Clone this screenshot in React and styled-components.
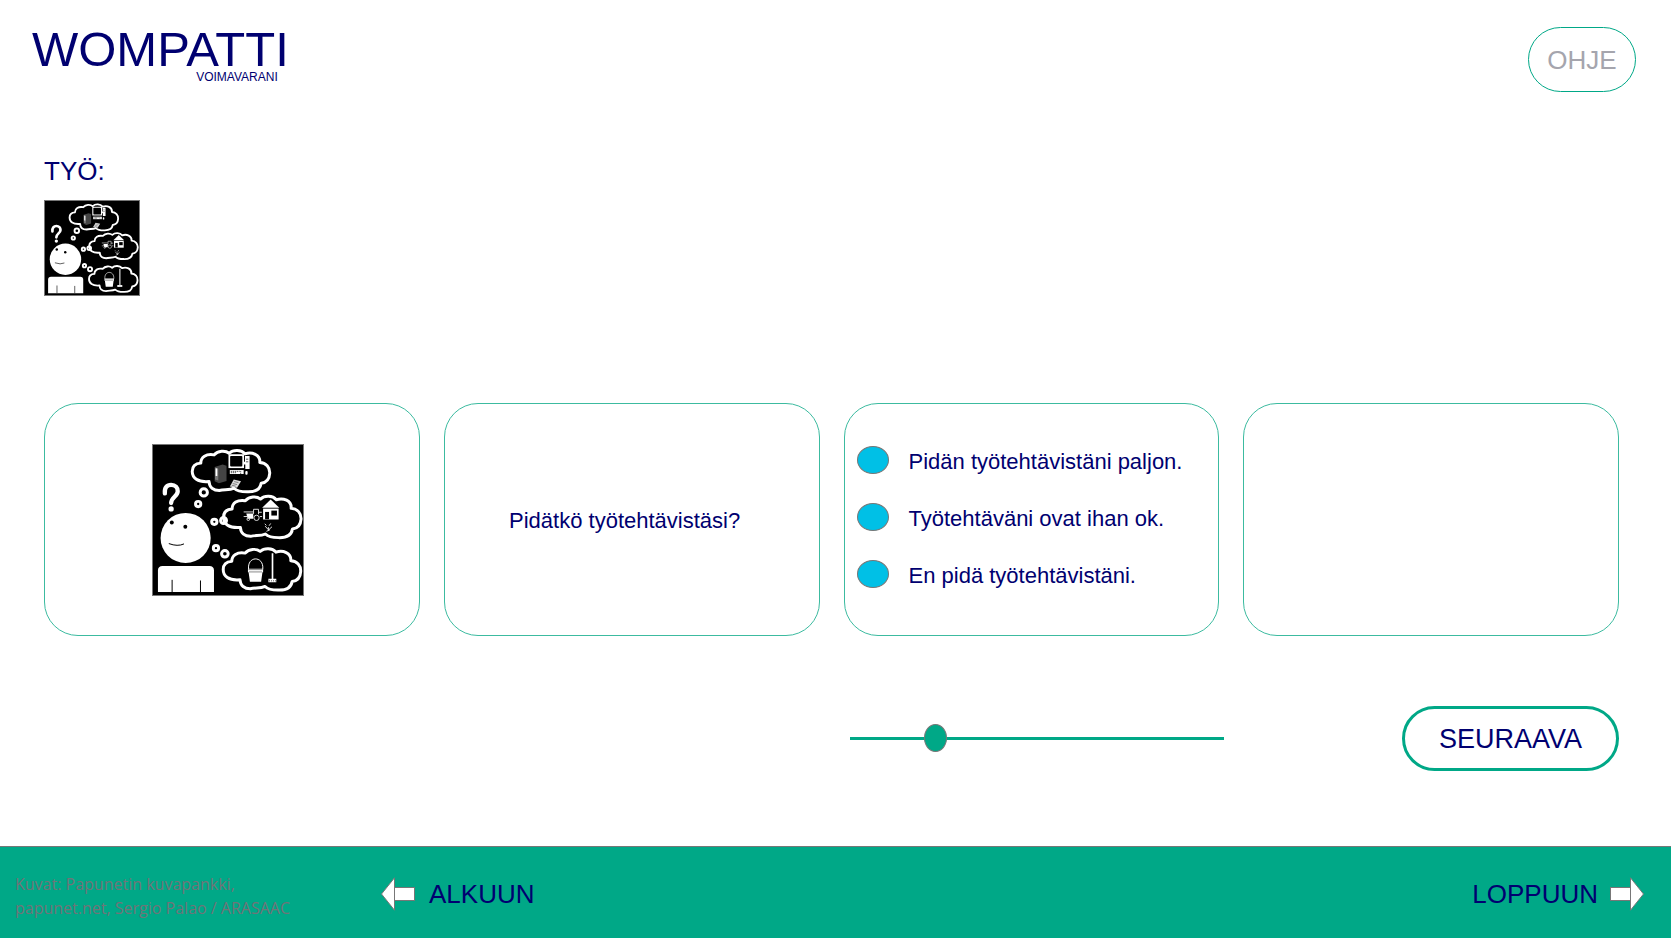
import React, { useState } from "react";
import styled, { createGlobalStyle } from "styled-components";

const navy = "#000070";
const green = "#00a887";
const outline = "#777777";

const GlobalStyle = createGlobalStyle`
  *, *::before, *::after { box-sizing: border-box; }
  body {
    margin: 0;
    background: #fff;
    color: ${navy};
    font-family: "Liberation Sans", Arial, sans-serif;
  }
  button, input { font: inherit; margin: 0; }
`;

const Page = styled.div`
  min-height: 100vh;
  display: flex;
  flex-direction: column;
`;

const Header = styled.header`
  display: flex;
  justify-content: space-between;
  align-items: flex-start;
  padding: 27px 35px 0 32px;
`;

const Brand = styled.div`
  display: flex;
  flex-direction: column;
  align-items: flex-end;
`;

const BrandName = styled.h1`
  margin: 0;
  font-size: 49px;
  line-height: 44px;
  font-weight: 400;
`;

const BrandTag = styled.p`
  margin: 0;
  padding-right: 11px;
  font-size: 12px;
  line-height: 12px;
`;

const PillButton = styled.button`
  width: ${(p) => (p.$wide ? 217 : 108)}px;
  height: 65px;
  padding: 0;
  border: ${(p) => (p.$wide ? 3 : 1)}px solid ${green};
  border-radius: 33px;
  background: #fff;
  color: ${(p) => (p.$muted ? "#a5a5ad" : navy)};
  font-size: ${(p) => (p.$wide ? 27 : 26)}px;
  line-height: 32px;
  cursor: pointer;
`;

const Main = styled.main`
  flex: 1;
  padding: 63px 52px 75px 44px;
`;

const Topic = styled.h2`
  margin: 0 0 13px;
  font-size: 26px;
  line-height: 32px;
  font-weight: 400;
`;

const Picture = styled.svg`
  display: block;
  width: ${(p) => p.$size}px;
  height: ${(p) => p.$size}px;
  border: 1px solid ${outline};
`;

const columns = `
  display: grid;
  grid-template-columns: repeat(4, minmax(0, 1fr));
  column-gap: 24px;
`;

const Cards = styled.div`
  ${columns}
  margin-top: 107px;
`;

const Card = styled.section`
  display: flex;
  align-items: center;
  justify-content: ${(p) => (p.$start ? "flex-start" : "center")};
  min-height: 233px;
  padding: 12px ${(p) => p.$end || 12}px 12px 12px;
  border: 1px solid #3cbba0;
  border-radius: 34px;
  font-size: 22px;
  line-height: 26px;
`;

const Question = styled.p`
  margin: 0;
  padding-top: 2px;
`;

const Options = styled.fieldset`
  margin: 0;
  padding: 0 0 6px;
  border: 0;
`;

const Option = styled.label`
  display: flex;
  align-items: center;
  gap: 20px;
  height: 57px;
  cursor: pointer;
`;

const OptionText = styled.span`
  padding-top: 4px;
`;

const Radio = styled.input`
  appearance: none;
  flex: none;
  width: 32px;
  height: 28px;
  border: 1px solid ${outline};
  border-radius: 50%;
  background: #00c0e6;
  &:checked { background: ${navy}; }
`;

const Controls = styled.div`
  ${columns}
  align-items: center;
  margin-top: 70px;
`;

const Slider = styled.input`
  grid-column: 3;
  appearance: none;
  height: 28px;
  margin: 0 -5px 0 6px;
  background: transparent;
  &::-webkit-slider-runnable-track {
    height: 3px;
    background: ${green};
  }
  &::-webkit-slider-thumb {
    appearance: none;
    width: 23px;
    height: 28px;
    margin-top: -13px;
    border: 1px solid ${outline};
    border-radius: 50%;
    background: ${green};
  }
`;

const NextCell = styled.div`
  grid-column: 4;
  display: flex;
  justify-content: flex-end;
`;

const Footer = styled.footer`
  display: flex;
  align-items: center;
  min-height: 92px;
  padding: 3px 27px 0 15px;
  border-top: 1px solid ${outline};
  background: ${green};
`;

const Credits = styled.p`
  flex: none;
  width: 366px;
  margin: 0;
  padding-top: 4px;
  color: #6f7478;
  font-family: "Open Sans", sans-serif;
  font-size: 16px;
  line-height: 24px;
  font-kerning: none;
`;

const NavButton = styled.button`
  display: flex;
  align-items: center;
  gap: ${(p) => (p.$end ? 11 : 13)}px;
  padding: 0;
  margin-left: ${(p) => (p.$end ? "auto" : "0")};
  border: 0;
  background: none;
  color: ${navy};
  font-size: 26px;
  line-height: 32px;
  cursor: pointer;
`;

const ArrowSvg = styled.svg`
  display: block;
  width: 35px;
  height: 34px;
  transform: ${(p) => (p.$flip ? "scaleX(-1)" : "none")};
`;

function Arrow({ flip }) {
  return (
    <ArrowSvg viewBox="0 0 35 34" $flip={flip} aria-hidden="true" fill="#fff" stroke="#777" strokeWidth="1">
      <rect x="13.5" y="10.5" width="20" height="13" />
      <path d="M.5 17 13.500.8V33.200Z" />
    </ArrowSvg>
  );
}

const cloud =
  "M207 152C172 155 156 141 156 121C156 106 165 97 182 96C182 78 198 67 222 71C234 58 256 56 268 66C281 54 305 55 316 68C337 61 363 70 361 94C380 95 392 109 391 127C390 145 380 155 365 157C362 177 345 184 322 183C302 183 290 179 283 172C268 179 254 175 238 179C221 179 208 170 207 152Z";

function WorkPicture({ size }) {
  return (
    <Picture $size={size} viewBox="37 41 455 455" role="img" aria-label="Työ">
      <rect x="37" y="41" width="455" height="455" fill="#000" />
      <g fill="none" stroke="#fff" strokeWidth="9" strokeLinejoin="round">
        <path d={cloud} />
        <path d={cloud} transform="translate(95 139)" />
        <path d={cloud} transform="translate(94 298)" />
        <circle cx="191" cy="185" r="11" />
        <circle cx="174" cy="220" r="8" />
        <circle cx="223" cy="274" r="8" />
        <circle cx="251" cy="270" r="9" />
        <circle cx="228" cy="354" r="8" />
        <circle cx="255" cy="371" r="10" />
      </g>
      <path d="M73 188C71 170 80 162 92 162C105 162 112 171 112 181C112 197 92 199 92 217" fill="none" stroke="#fff" strokeWidth="13" strokeLinecap="round" />
      <g fill="#fff">
        <circle cx="92" cy="235" r="8" />
        <circle cx="136" cy="323" r="76" />
        <path d="M52 487V422Q52 408 66 408H208Q222 408 222 422V487Z" />
      </g>
      <circle cx="94" cy="276" r="6" />
      <circle cx="135" cy="289" r="6" />
      <path d="M85 340Q112 350 131 341M95 450V487M181 452V487" fill="none" stroke="#000" strokeWidth="3" />

      <g fill="#fff">
        <rect x="266" y="69" width="47" height="42" />
        <rect x="271" y="74" width="37" height="32" rx="3" fill="#000" />
        <path d="M316 74H330V114H317V100H313V92H316Z" />
        <path d="M319 84H326M319 92H326" stroke="#000" strokeWidth="2" />
        <rect x="270" y="117" width="42" height="12" />
        <path d="M273 121H300M273 125H290M303 120V129" stroke="#000" strokeWidth="2" strokeDasharray="4 2" />
        <rect x="317" y="120" width="7" height="11" rx="3" />
        <path d="M224 108 248 100 260 104V150L237 157 224 151Z" fill="#444" />
        <path d="M225 109 235 113V149L225 146Z" fill="#777" />
        <path d="M227 112H232V135H227Z" />
        <path d="M282 146 304 151 292 171 270 167Z" fill="#ddd" />
        <path d="M283 152 296 155M279 158 292 161M276 163 288 166" stroke="#555" strokeWidth="2" />
      </g>

      <g fill="#fff">
        <path d="M368 231 394 206 420 231Z" />
        <rect x="371" y="234" width="47" height="33" />
        <rect x="377" y="244" width="12" height="22" fill="#000" />
        <rect x="396" y="240" width="17" height="15" fill="#000" />
        <path d="M320 249H341V265H324Z" />
        <g fill="none" stroke="#ddd" strokeWidth="3">
          <path d="M342 250V236H357V251M312 244H341M312 258H323M357 245H367M361 258H368" />
          <circle cx="351" cy="262" r="8" />
          <circle cx="326" cy="266" r="4" />
          <path d="M387 302V290M387 298 377 287M387 299 398 289M381 285 376 280M389 286 394 279M381 303 392 298" />
        </g>
      </g>

      <path d="M327 418C322 376 374 376 370 418" fill="none" stroke="#fff" strokeWidth="3" />
      <path d="M325 416H371V427H369L365 456H331L327 427H325Z" fill="#fff" />
      <path d="M327 419H369M328 426H368" stroke="#888" strokeWidth="3" />
      <path d="M397 369H402V447H411V457H387V447H397Z" fill="#fff" />
      <path d="M389 453H410" stroke="#000" strokeWidth="2" strokeDasharray="3 3" />
    </Picture>
  );
}

const answers = [
  "Pidän työtehtävistäni paljon.",
  "Työtehtäväni ovat ihan ok.",
  "En pidä työtehtävistäni.",
];

export default function App() {
  const [level, setLevel] = useState(213);
  return (
    <Page>
      <GlobalStyle />
      <Header>
        <Brand>
          <BrandName>WOMPATTI</BrandName>
          <BrandTag>VOIMAVARANI</BrandTag>
        </Brand>
        <PillButton type="button" $muted>OHJE</PillButton>
      </Header>
      <Main>
        <Topic>TYÖ:</Topic>
        <WorkPicture size={96} />
        <Cards>
          <Card $end={20}>
            <WorkPicture size={152} />
          </Card>
          <Card $end={26}>
            <Question id="question">Pidätkö työtehtävistäsi?</Question>
          </Card>
          <Card $start>
            <Options aria-labelledby="question">
              {answers.map((answer) => (
                <Option key={answer}>
                  <Radio type="radio" name="answer" value={answer} />
                  <OptionText>{answer}</OptionText>
                </Option>
              ))}
            </Options>
          </Card>
          <Card />
        </Cards>
        <Controls>
          <Slider
            type="range"
            min="0"
            max="1000"
            value={level}
            aria-labelledby="question"
            onChange={(e) => setLevel(Number(e.target.value))}
          />
          <NextCell>
            <PillButton type="button" $wide>SEURAAVA</PillButton>
          </NextCell>
        </Controls>
      </Main>
      <Footer>
        <Credits>
          Kuvat: Papunetin kuvapankki,
          <br />
          papunet.net, Sergio Palao / ARASAAC
        </Credits>
        <NavButton type="button">
          <Arrow />
          ALKUUN
        </NavButton>
        <NavButton type="button" $end>
          LOPPUUN
          <Arrow flip />
        </NavButton>
      </Footer>
    </Page>
  );
}
